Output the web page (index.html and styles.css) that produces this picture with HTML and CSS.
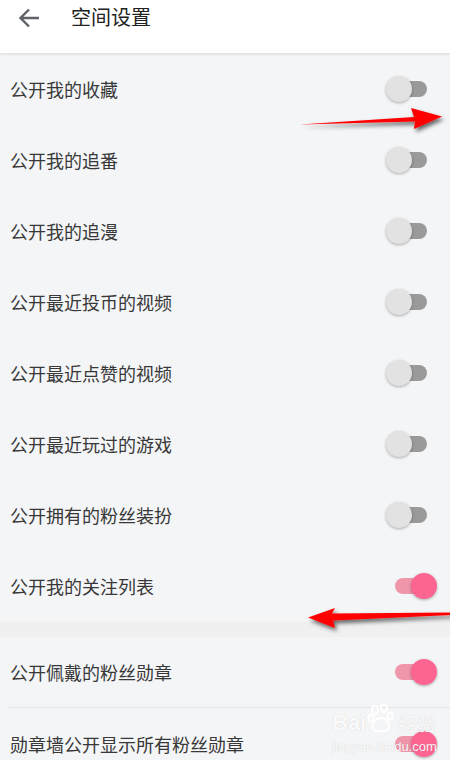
FILE: index.html
```html
<!DOCTYPE html>
<html lang="zh-CN">
<head>
  <meta charset="UTF-8">
  <meta name="viewport" content="width=device-width, initial-scale=1.0">
  <title>空间设置</title>
  <link rel="stylesheet" href="styles.css">
</head>
<body>
  <div class="page">
    <div class="topbar">
      <svg class="back" width="22" height="22" viewBox="0 0 22 22">
        <path d="M21 11H3M11 2.5L2.5 11L11 19.5" fill="none" stroke="#5f6368" stroke-width="2.4"/>
      </svg>
      <div class="title">空间设置</div>
    </div>

    <div class="group">
      <div class="row"><span class="label">公开我的收藏</span><span class="switch"><i></i></span></div>
      <div class="row"><span class="label">公开我的追番</span><span class="switch"><i></i></span></div>
      <div class="row"><span class="label">公开我的追漫</span><span class="switch"><i></i></span></div>
      <div class="row"><span class="label">公开最近投币的视频</span><span class="switch"><i></i></span></div>
      <div class="row"><span class="label">公开最近点赞的视频</span><span class="switch"><i></i></span></div>
      <div class="row"><span class="label">公开最近玩过的游戏</span><span class="switch"><i></i></span></div>
      <div class="row"><span class="label">公开拥有的粉丝装扮</span><span class="switch"><i></i></span></div>
      <div class="row"><span class="label">公开我的关注列表</span><span class="switch on"><i></i></span></div>
    </div>

    <div class="spacer"></div>

    <div class="group">
      <div class="row lined"><span class="label">公开佩戴的粉丝勋章</span><span class="switch on"><i></i></span></div>
      <div class="row"><span class="label">勋章墙公开显示所有粉丝勋章</span><span class="switch on"><i></i></span></div>
    </div>

    <!-- red arrows drawn over the screenshot -->
    <svg class="marks" width="450" height="760" viewBox="0 0 450 760">
      <defs>
        <filter id="sh" x="-10%" y="-50%" width="120%" height="200%">
          <feDropShadow dx="2" dy="3" stdDeviation="2" flood-color="#000" flood-opacity="0.6"/>
        </filter>
      </defs>
      <polygon filter="url(#sh)" fill="#ff0000" points="300,124.5 414,117 411,108 442,116.5 414,129 415,121.5"/>
      <polygon filter="url(#sh)" fill="#ff0000" points="308,617.5 335,608 332,613.5 452,612.5 452,615 333,620.5 335,628"/>
    </svg>

    <div class="watermark">
      <div class="wm-top">
        <span>Bai</span>
        <svg class="paw" width="30" height="30" viewBox="0 0 30 30">
          <ellipse cx="8" cy="7" rx="3" ry="4" fill="none" stroke="#fff" stroke-width="2"/>
          <ellipse cx="17" cy="5" rx="3" ry="4" fill="none" stroke="#fff" stroke-width="2"/>
          <ellipse cx="4" cy="15" rx="2.5" ry="3.5" fill="none" stroke="#fff" stroke-width="2"/>
          <ellipse cx="23" cy="13" rx="2.5" ry="3.5" fill="none" stroke="#fff" stroke-width="2"/>
          <path d="M6 26C4 21 9 15 14 15C19 15 24 21 21 26C18 29 9 29 6 26Z" fill="none" stroke="#fff" stroke-width="2"/>
        </svg>
        <span class="wm-cn">经验</span>
      </div>
      <div class="wm-url">jingyan.baidu.com</div>
    </div>
  </div>
</body>
</html>
```

FILE: styles.css
```css
body {
  margin: 0;
  background-color: #f4f5f7;
  font-family: "Noto Sans CJK SC", "Noto Sans", sans-serif;
}

.page {
  position: relative;
  width: 450px;
  height: 760px;
  overflow: hidden;
  background-color: #f4f5f7;
}

.topbar {
  height: 53px;
  background-color: #fff;
  box-shadow: 0 1px 3px rgba(0, 0, 0, 0.12);
  display: flex;
  align-items: flex-start;
  position: relative;
  z-index: 1;
}

.back {
  margin: 7px 0 0 18px;
}

.title {
  margin: 3px 0 0 31px;
  font-size: 20px;
  line-height: 28px;
  color: #222;
}

.group {
  background-color: #f4f5f7;
}

.spacer {
  height: 16px;
  background-color: #f0f0f1;
}

.row {
  height: 71px;
  display: flex;
  align-items: center;
  justify-content: space-between;
  padding: 0 23px 0 10px;
  box-sizing: border-box;
}

.row.lined {
  border-bottom: 1px solid #e4e4e6;
  margin-left: 8px;
  padding-left: 2px;
}

.label {
  font-size: 18px;
  color: #383838;
}

.switch {
  position: relative;
  width: 32px;
  height: 16px;
  border-radius: 8px;
  background-color: #9a9a9a;
}

.switch i {
  position: absolute;
  top: -5px;
  left: -9px;
  width: 26px;
  height: 26px;
  border-radius: 50%;
  background-color: #e2e2e2;
  box-shadow: 0 1px 3px rgba(0, 0, 0, 0.3);
}

.switch.on {
  background-color: #f096aa;
}

.switch.on i {
  left: auto;
  right: -10px;
  background-color: #fd6591;
}

.marks {
  position: absolute;
  left: 0;
  top: 0;
  z-index: 2;
}

.watermark {
  position: absolute;
  left: 332px;
  top: 703px;
  z-index: 3;
  color: rgba(255, 255, 255, 0.92);
  text-shadow: 0 0 1px rgba(120, 120, 120, 0.35);
  font-family: "Liberation Sans", sans-serif;
}

.wm-top {
  display: flex;
  align-items: flex-end;
  height: 32px;
}

.wm-top span {
  font-size: 22px;
  font-weight: bold;
  line-height: 24px;
}

.paw {
  margin: 0 1px 2px 1px;
}

.wm-top .wm-cn {
  font-family: "Noto Sans CJK SC", sans-serif;
  font-size: 19px;
  font-weight: normal;
}

.wm-url {
  font-size: 13px;
  margin-top: 4px;
}
```
